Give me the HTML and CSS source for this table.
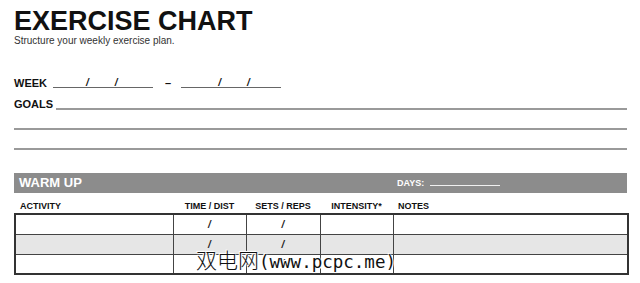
FILE: index.html
```html
<!DOCTYPE html>
<html lang="en">
<head>
<meta charset="utf-8">
<title>Exercise Chart</title>
<link rel="stylesheet" href="styles.css">
</head>
<body>
<div class="page">
  <h1 class="title">EXERCISE CHART</h1>
  <p class="subtitle">Structure your weekly exercise plan.</p>

  <div class="week">
    <span class="label">WEEK</span>
    <span class="date date-a"><i>/</i><i>/</i></span>
    <span class="dash">–</span>
    <span class="date date-b"><i>/</i><i>/</i></span>
  </div>

  <div class="goals">
    <span class="label">GOALS</span>
    <span class="fill"></span>
  </div>
  <div class="rule"></div>
  <div class="rule"></div>

  <section class="block">
    <div class="bar">
      <span class="bar-title">WARM UP</span>
      <span class="days">DAYS: <span class="days-line"></span></span>
    </div>
    <table class="grid">
      <colgroup>
        <col class="c-act"><col class="c-time"><col class="c-sets"><col class="c-int"><col class="c-notes">
      </colgroup>
      <thead>
        <tr>
          <th class="left">ACTIVITY</th>
          <th>TIME / DIST</th>
          <th>SETS / REPS</th>
          <th>INTENSITY*</th>
          <th class="left">NOTES</th>
        </tr>
      </thead>
      <tbody>
        <tr><td></td><td class="sl">/</td><td class="sl">/</td><td></td><td></td></tr>
        <tr class="shade"><td></td><td class="sl">/</td><td class="sl">/</td><td></td><td></td></tr>
        <tr><td></td><td class="sl">/</td><td class="sl">/</td><td></td><td></td></tr>
      </tbody>
    </table>
  </section>

  <div class="watermark"><span class="wm-cjk">双电网</span><span class="wm-lat">(www.pcpc.me)</span></div>
</div>
</body>
</html>
```

FILE: styles.css
```css
* { box-sizing: border-box; }
html, body { margin: 0; padding: 0; background: #fff; }
body { font-family: "Liberation Sans", Arial, sans-serif; color: #111; }

.page {
  position: relative;
  width: 640px;
  height: 283px;
  padding: 0 13px 0 14px;
  overflow: hidden;
}

.title {
  margin: 8px 0 0;
  font-size: 27px;
  line-height: 27px;
  font-weight: 700;
  color: #111;
}
.subtitle {
  margin: 0;
  font-size: 10px;
  line-height: 12px;
  color: #333;
}

.label { font-weight: 700; font-size: 11px; color: #111; }

.week {
  margin-top: 30px;
  height: 13px;
  line-height: 13px;
  font-size: 11px;
  display: flex;
  align-items: baseline;
}
.date {
  display: inline-flex;
  width: 100px;
  height: 11px;
  line-height: 11px;
  border-bottom: 1px solid #666;
  font-size: 10px;
  font-weight: 700;
  align-self: flex-start;
}
.date i { font-style: italic; }
.date-a { margin-left: 6px; padding-left: 33px; gap: 26px; }
.date-b { padding-left: 37px; gap: 26px; }
.dash { margin: 0 10px 0 12px; font-weight: 700; }

.goals {
  margin-top: 9px;
  height: 11px;
  display: flex;
  align-items: flex-end;
}
.goals .label { line-height: 11px; }
.fill {
  flex: 1;
  margin-left: 3px;
  border-bottom: 2px solid #9a9a9a;
}
.rule {
  margin-top: 18px;
  border-top: 2px solid #9a9a9a;
}

.block { margin-top: 23px; }
.bar {
  display: grid;
  grid-template-columns: 378px 1fr;
  height: 20px;
  background: #8c8c8c;
  color: #fff;
  align-items: center;
}
.bar-title {
  padding-left: 5px;
  font-size: 13px;
  line-height: 20px;
  font-weight: 700;
}
.days {
  padding-left: 5px;
  font-size: 9px;
  font-weight: 700;
  display: flex;
  align-items: baseline;
}
.days-line {
  display: inline-block;
  width: 70px;
  margin-left: 6px;
  border-bottom: 1px solid #f0f0f0;
}

.grid {
  width: 613px;
  table-layout: fixed;
  border-collapse: collapse;
}
.c-act { width: 158px; }
.c-time { width: 73px; }
.c-sets { width: 74px; }
.c-int { width: 73px; }
.c-notes { width: 235px; }

.grid th {
  height: 21px;
  padding: 0 5px 1px;
  vertical-align: bottom;
  font-size: 9px;
  line-height: 11px;
  font-weight: 700;
  text-align: center;
  color: #111;
  border: none;
}
.grid th.left { text-align: left; }

.grid tbody { border: 2px solid #333; }
.grid td {
  height: 20px;
  padding: 0;
  border: 1px solid #444;
  font-size: 10px;
  font-weight: 700;
  font-style: italic;
  text-align: center;
  color: #222;
}
.grid tr.shade td { background: #e6e6e6; }

.watermark {
  position: absolute;
  left: 196px;
  top: 244px;
  white-space: nowrap;
  color: #111;
  text-shadow: 0 0 2px #fff, 0 0 2px #fff, 1px 1px 0 #fff, -1px -1px 0 #fff;
  line-height: 30px;
}
.wm-cjk {
  font-family: "Noto Sans CJK SC", sans-serif;
  font-size: 21px;
  font-weight: 300;
}
.wm-lat {
  font-family: "DejaVu Sans Mono", monospace;
  font-size: 17.5px;
}
```
